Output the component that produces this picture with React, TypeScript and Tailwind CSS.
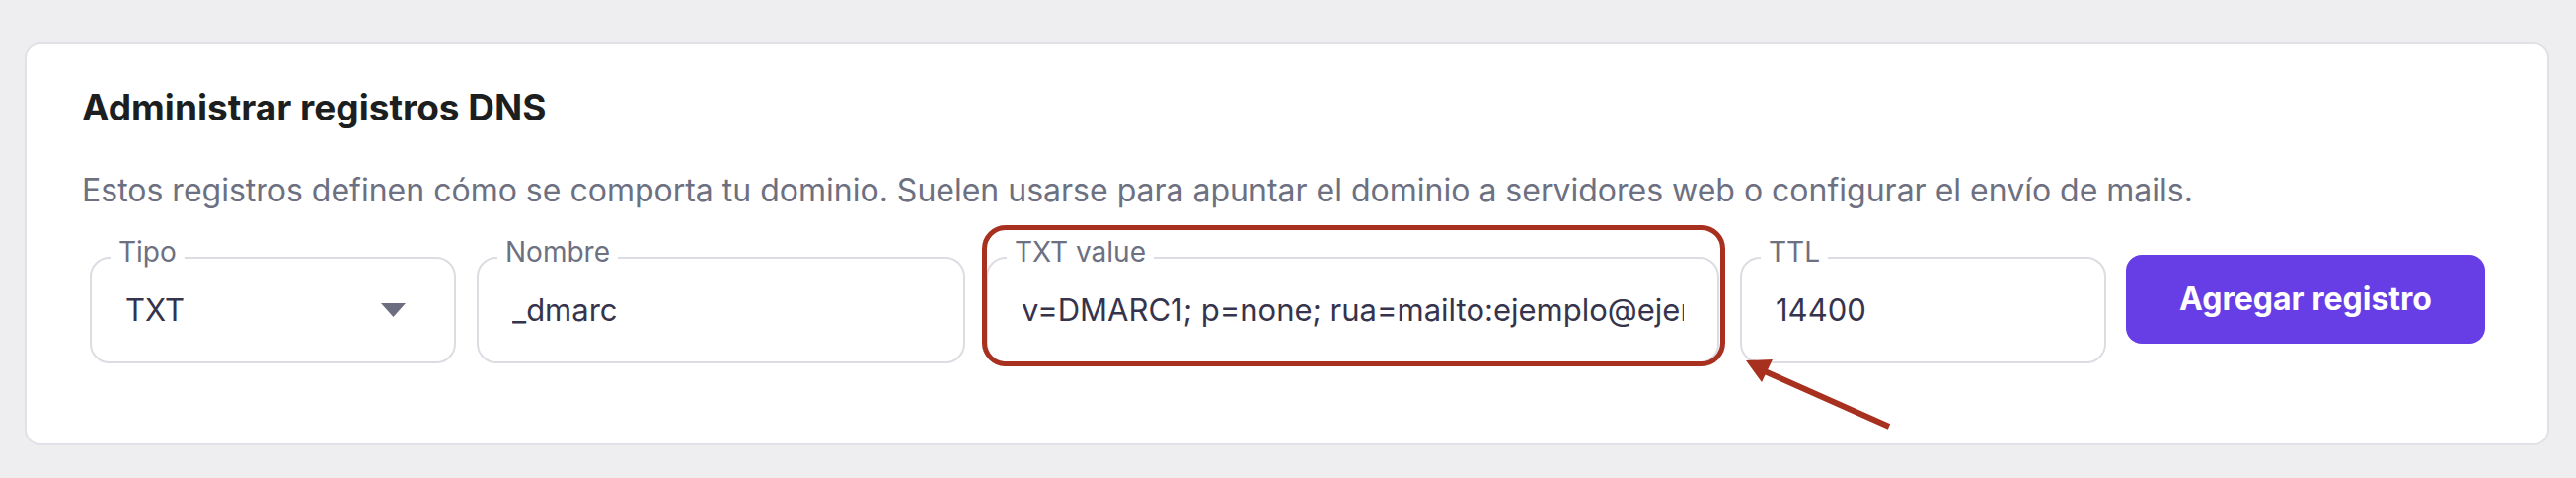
import React from 'react';

interface FieldProps {
  label: string;
  value: string;
  width: string;
  select?: boolean;
  highlight?: boolean;
}

const Field: React.FC<FieldProps> = ({ label, value, width, select, highlight }) => {
  return (
    <div className={`relative h-[108px] ${width} rounded-[20px] border-2 border-[#dcdde3] bg-white flex items-center pl-[34px] pr-[34px]`}>
      <span className="absolute left-[19px] top-[-21px] px-2 bg-white text-[28px] leading-[28px] text-[#6d7081]">
        {label}
      </span>
      <input
        readOnly
        value={value}
        className="w-full min-w-0 bg-transparent outline-none text-[31px] leading-[40px] text-[#36344d]"
      />
      {select && (
        <svg width="25" height="14" viewBox="0 0 25 14" className="shrink-0 ml-4 mr-[15px]">
          <polygon points="0,0 25,0 12.5,14" fill="#6d6d80" />
        </svg>
      )}
      {highlight && (
        // red annotation frame drawn over the field
        <div className="pointer-events-none absolute left-[-6px] top-[-34px] right-[-8px] bottom-[-5px] rounded-[24px] border-[5px] border-[#a8301f]" />
      )}
    </div>
  );
};

export default function App() {
  return (
    <div className="relative h-[484px] w-[2610px] bg-[#eeeef1] pt-[43px] pl-[25px] pr-[27px] font-['Inter',sans-serif]">
      <div className="h-[408px] rounded-2xl border-2 border-[#e0e0e6] bg-white pt-[40px] pl-[56px]">
        <h1 className="text-[37px] leading-[48px] font-bold text-[#1d1e20]">Administrar registros DNS</h1>
        <p className="mt-[40px] text-[32px] leading-[40px] text-[#6d7081]">
          Estos registros definen cómo se comporta tu dominio. Suelen usarse para apuntar el dominio a servidores web o configurar el envío de mails.
        </p>
        <div className="mt-[47px] ml-2 flex items-start gap-[21px]">
          <Field label="Tipo" value="TXT" width="w-[371px]" select />
          <Field label="Nombre" value="_dmarc" width="w-[495px]" />
          <Field label="TXT value" value="v=DMARC1; p=none; rua=mailto:ejemplo@ejemplo.com" width="w-[743px]" highlight />
          <Field label="TTL" value="14400" width="w-[371px]" />
          <button className="mt-[-2px] ml-[-1px] h-[90px] w-[364px] rounded-2xl bg-[#673de6] text-[32px] font-bold text-white">
            Agregar registro
          </button>
        </div>
      </div>
      {/* annotation arrow pointing at the TXT value field */}
      <svg className="absolute left-[1740px] top-[340px]" width="200" height="110" viewBox="0 0 200 110">
        <line x1="48" y1="36" x2="174" y2="92" stroke="#a8301f" strokeWidth="6" strokeLinecap="butt" />
        <polygon points="29,25 56,24 45,47" fill="#a8301f" />
      </svg>
    </div>
  );
}
